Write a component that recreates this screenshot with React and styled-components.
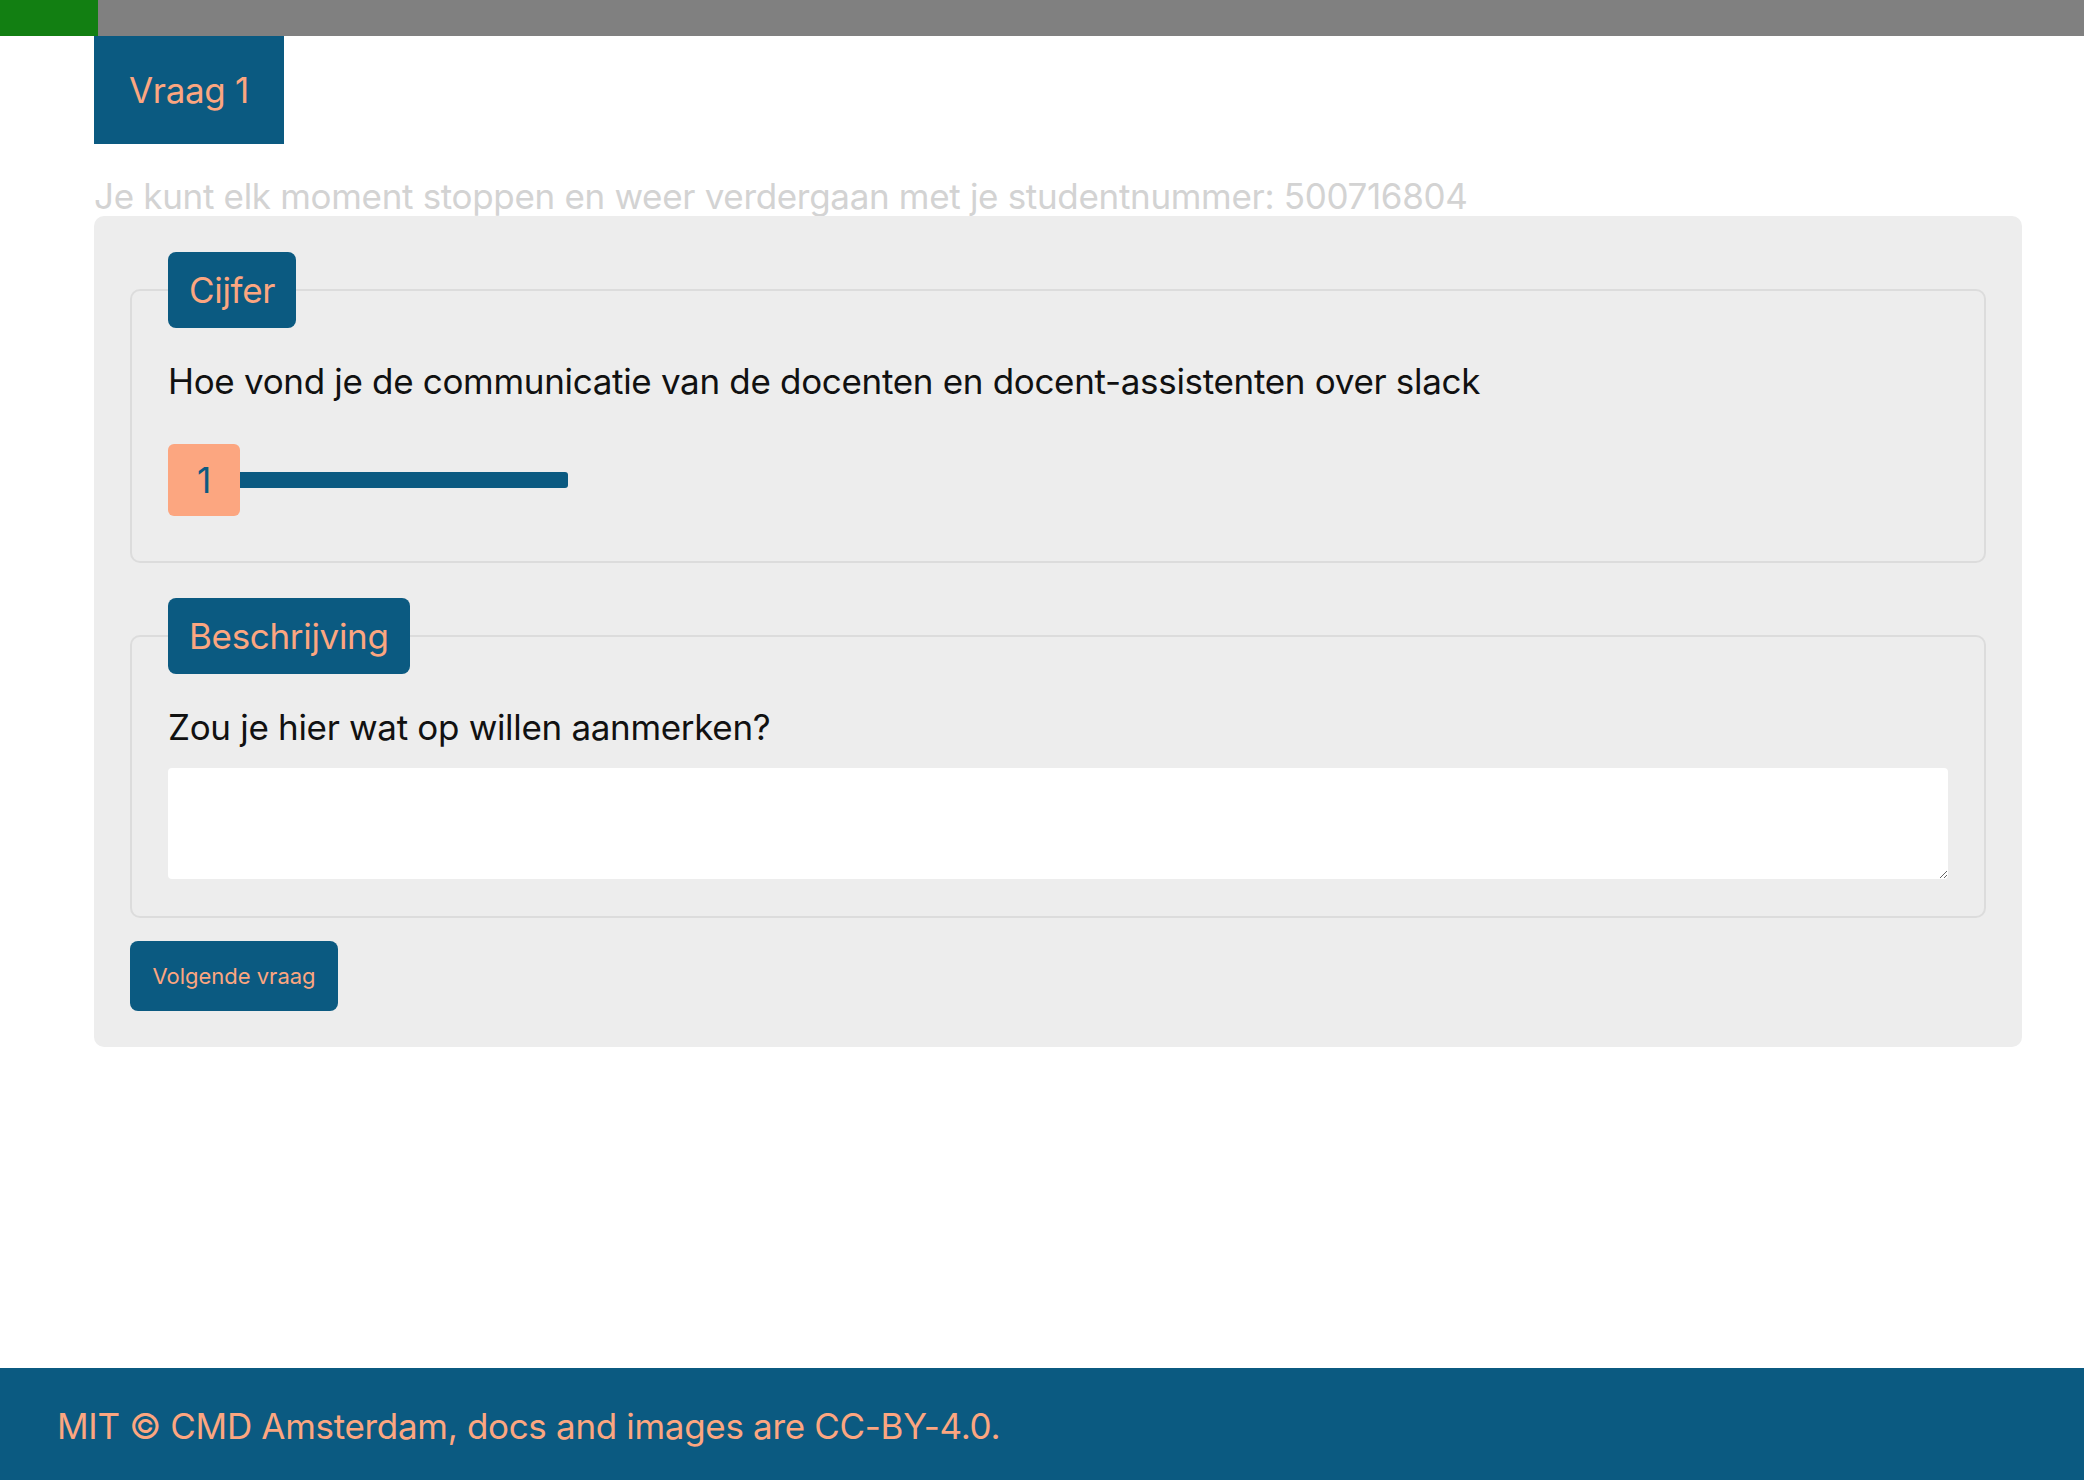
import React from "react";
import styled, { createGlobalStyle } from "styled-components";

const GlobalStyle = createGlobalStyle`
  html, body { margin: 0; padding: 0; background: #ffffff; }
  body {
    font-family: Inter, "Noto Sans", "Liberation Sans", sans-serif;
    letter-spacing: -0.02em;
  }
  #root { min-height: 100vh; }
`;

const BLUE = "#0b5a81";
const SALMON = "#fca680";

const Page = styled.div`
  min-height: 100vh;
  display: flex;
  flex-direction: column;
`;

const Progress = styled.div`
  display: flex;
  height: 36px;
  background: #808080;
`;

const ProgressFill = styled.div`
  background: #127f12;
  height: 100%;
`;

const Main = styled.main`
  padding: 0 62px 0 94px;
  display: flex;
  flex-direction: column;
  align-items: flex-start;
`;

const QuestionTab = styled.h1`
  margin: 0;
  background: ${BLUE};
  color: ${SALMON};
  font-weight: 400;
  font-size: 35px;
  line-height: 108px;
  padding: 0 35px;
`;

const Info = styled.p`
  margin: 32px 0 0;
  color: #d3d3d3;
  font-size: 35px;
  line-height: 40px;
  height: 40px;
`;

const Card = styled.form`
  box-sizing: border-box;
  width: 100%;
  background: #ededed;
  border-radius: 10px;
  padding: 36px;
  display: flex;
  flex-direction: column;
  align-items: flex-start;
`;

const Fieldset = styled.fieldset`
  box-sizing: border-box;
  width: 100%;
  margin: ${(p) => (p.$first ? "0" : "35px 0 0")};
  border: 2px solid #dcdcdc;
  border-radius: 10px;
  padding: 0 36px 37px;
  min-inline-size: 0;
`;

const Legend = styled.legend`
  background: ${BLUE};
  color: ${SALMON};
  font-size: 35px;
  line-height: 76px;
  padding: 0 21px;
  border-radius: 8px;
`;

const Question = styled.p`
  margin: 32px 0 0;
  color: #111111;
  font-size: 35px;
  line-height: 42px;
`;

const SliderRow = styled.div`
  display: flex;
  align-items: center;
  margin: 42px 0 8px;
  height: 72px;
`;

const Thumb = styled.div`
  width: 72px;
  height: 72px;
  background: ${SALMON};
  color: ${BLUE};
  border-radius: 6px;
  display: flex;
  align-items: center;
  justify-content: center;
  font-size: 35px;
`;

const Track = styled.div`
  width: 328px;
  height: 16px;
  background: ${BLUE};
  border-radius: 0 3px 3px 0;
`;

const TextArea = styled.textarea`
  display: block;
  box-sizing: border-box;
  width: 100%;
  height: 111px;
  margin-top: 20px;
  border: none;
  border-radius: 4px;
  background: #ffffff;
  resize: vertical;
  font-family: inherit;
  font-size: 24px;
  outline: none;
`;

const NextButton = styled.button`
  margin-top: 23px;
  width: 208px;
  height: 70px;
  background: ${BLUE};
  color: ${SALMON};
  border: none;
  border-radius: 8px;
  font-family: Inter, "Noto Sans", sans-serif;
  font-size: 22px;
  letter-spacing: 0;
  cursor: pointer;
`;

const Footer = styled.footer`
  margin-top: auto;
  box-sizing: border-box;
  height: 112px;
  background: ${BLUE};
  color: ${SALMON};
  display: flex;
  align-items: center;
  padding: 3px 0 0 57px;
  font-size: 35px;
`;

export default function App() {
  return (
    <>
      <GlobalStyle />
      <Page>
        <Progress>
          <ProgressFill style={{ width: "98px" }} />
        </Progress>
        <Main>
          <QuestionTab>Vraag 1</QuestionTab>
          <Info>Je kunt elk moment stoppen en weer verdergaan met je studentnummer: 500716804</Info>
          <Card onSubmit={(e) => e.preventDefault()}>
            <Fieldset $first>
              <Legend>Cijfer</Legend>
              <Question>Hoe vond je de communicatie van de docenten en docent-assistenten over slack</Question>
              <SliderRow>
                <Thumb>1</Thumb>
                <Track />
              </SliderRow>
            </Fieldset>
            <Fieldset>
              <Legend>Beschrijving</Legend>
              <Question>Zou je hier wat op willen aanmerken?</Question>
              <TextArea />
            </Fieldset>
            <NextButton type="submit">Volgende vraag</NextButton>
          </Card>
        </Main>
        <Footer>MIT © CMD Amsterdam, docs and images are CC-BY-4.0.</Footer>
      </Page>
    </>
  );
}
